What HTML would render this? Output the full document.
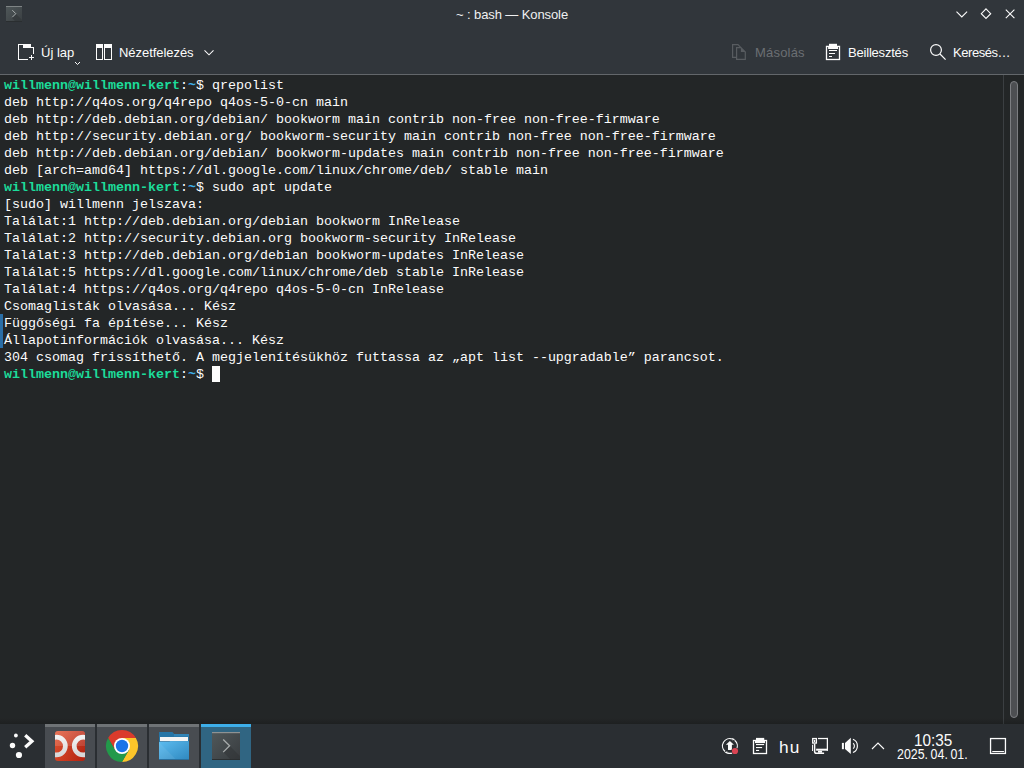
<!DOCTYPE html>
<html><head><meta charset="utf-8">
<style>
html,body{margin:0;padding:0;width:1024px;height:768px;overflow:hidden;background:#232627;}
*{box-sizing:border-box;}
.abs{position:absolute;}
svg{position:absolute;overflow:visible;}
#win{position:absolute;left:0;top:0;width:1024px;height:74px;background:#31363b;}
.ui{position:absolute;font-family:"Liberation Sans",sans-serif;font-size:12.5px;line-height:15px;color:#fcfcfc;white-space:nowrap;}
#sep{position:absolute;left:0;top:74px;width:1024px;height:1px;background:#63676b;}
#term{position:absolute;left:0;top:75px;width:1024px;height:649px;background:#232627;}
#vline{position:absolute;left:1003px;top:75px;width:1px;height:649px;background:#3b3f42;}
#handle{position:absolute;left:1010px;top:81px;width:8px;height:637px;border:1px solid #7c7e81;background:#4d4f52;border-radius:4px;}
pre{margin:0;position:absolute;left:4px;top:77px;font-family:"Liberation Mono",monospace;font-size:13.33px;line-height:17px;color:#fcfcfc;}
.g{color:#1cdc9a;font-weight:bold;}
.b{color:#3daee9;font-weight:bold;}
#cursor{position:absolute;left:212px;top:366px;width:8px;height:16px;background:#fcfcfc;}
#bluebar{position:absolute;left:0;top:314px;width:3px;height:34px;background:#2a6ea6;}
#panel{position:absolute;left:0;top:724px;width:1024px;height:44px;background:#2a2e32;}
.task{position:absolute;top:724px;width:50px;height:44px;background:#484c51;border-top:3px solid #6f7376;}
.task.act{background:#306582;border-top-color:#3daee9;}
</style></head><body>
<div id="win"></div>
<!-- titlebar icon -->
<svg style="left:0;top:0" width="28" height="28" viewBox="0 0 28 28">
  <defs><linearGradient id="kg1" x1="0" y1="0" x2="1" y2="1"><stop offset="0" stop-color="#4f5759"/><stop offset="1" stop-color="#3a3f42"/></linearGradient></defs>
  <rect x="6" y="6" width="16" height="16" fill="url(#kg1)"/>
  <rect x="6" y="6" width="16" height="1" fill="#7f8485"/>
  <rect x="6" y="21" width="16" height="1" fill="#2a2e30"/>
  <path d="M16 14 L22 20 V21 H15 L12 18 Z" fill="#33383b" opacity="0.8"/>
  <path d="M12.3 10.2 L15.8 13.7 L12.3 17.2" fill="none" stroke="#a9aeae" stroke-width="1"/>
</svg>
<div class="ui" style="left:456px;top:7px;font-size:13px;letter-spacing:-0.1px;color:#eff0f1;">~ : bash — Konsole</div>
<!-- titlebar buttons -->
<svg style="left:944px;top:0" width="80" height="30" viewBox="0 0 80 30">
  <path d="M12.5 11.7 L17.8 16.9 L23.1 11.7" fill="none" stroke="#fcfcfc" stroke-width="1.1"/>
  <path d="M42 8.9 L46.7 13.7 L42 18.5 L37.3 13.7 Z" fill="none" stroke="#fcfcfc" stroke-width="1.1"/>
  <path d="M61.8 9.6 L70.4 18.2 M70.4 9.6 L61.8 18.2" fill="none" stroke="#fcfcfc" stroke-width="1.1"/>
</svg>
<!-- toolbar -->
<svg style="left:18px;top:44px" width="16" height="16" viewBox="0 0 16 16">
  <rect x="0" y="0" width="1" height="16" fill="#fcfcfc"/>
  <rect x="0" y="0" width="13" height="1" fill="#fcfcfc"/>
  <rect x="5" y="0" width="8" height="4" fill="#fcfcfc"/>
  <rect x="13" y="3" width="3" height="1" fill="#fcfcfc"/>
  <rect x="15" y="3" width="1" height="7" fill="#fcfcfc"/>
  <rect x="0" y="15" width="10" height="1" fill="#fcfcfc"/>
  <rect x="13" y="11" width="1" height="5" fill="#fcfcfc"/>
  <rect x="11" y="13" width="5" height="1" fill="#fcfcfc"/>
</svg>
<div class="ui" style="left:41px;top:45px;font-size:13px;letter-spacing:0px;">Új lap</div>
<svg style="left:74px;top:60px" width="8" height="6" viewBox="0 0 8 6">
  <path d="M1 2 L3.5 4.5 L6 2" fill="none" stroke="#fcfcfc" stroke-width="1"/>
</svg>
<svg style="left:96px;top:44px" width="16" height="16" viewBox="0 0 16 16">
  <rect x="0.5" y="0.5" width="6" height="15" fill="none" stroke="#fcfcfc" stroke-width="1"/>
  <rect x="0" y="0" width="7" height="4" fill="#fcfcfc"/>
  <rect x="8.5" y="0.5" width="7" height="15" fill="none" stroke="#fcfcfc" stroke-width="1"/>
  <rect x="8" y="0" width="8" height="4" fill="#fcfcfc"/>
</svg>
<div class="ui" style="left:119px;top:45px;font-size:13px;letter-spacing:-0.05px;">Nézetfelezés</div>
<svg style="left:200px;top:44px" width="18" height="16" viewBox="0 0 18 16">
  <path d="M4.5 6.3 L9 10.8 L13.5 6.3" fill="none" stroke="#fcfcfc" stroke-width="1.05"/>
</svg>
<svg style="left:729px;top:42px" width="20" height="20" viewBox="0 0 20 20">
  <path d="M7.6 15.3 H3.6 V2.7 H9 L11.9 5.6" fill="none" stroke="#585c60" stroke-width="1.2"/>
  <path d="M7.6 17.4 V5.6 H11.9 L16.3 10 V17.4 Z" fill="none" stroke="#585c60" stroke-width="1.2"/>
  <path d="M11.9 5.6 L16.3 10 H11.9 Z" fill="#585c60"/>
</svg>
<div class="ui" style="left:755px;top:45px;font-size:13px;letter-spacing:0.2px;color:#6b6f73;">Másolás</div>
<svg style="left:823px;top:42px" width="20" height="20" viewBox="0 0 20 20">
  <rect x="3.5" y="4.4" width="13" height="13.1" fill="none" stroke="#fcfcfc" stroke-width="1.3"/>
  <rect x="6" y="1.8" width="8" height="3.2" fill="#fcfcfc"/>
  <rect x="5.1" y="4.5" width="9.9" height="2.5" fill="#fcfcfc"/>
  <rect x="6" y="8" width="8" height="1" fill="#fcfcfc"/>
  <rect x="6" y="11" width="6" height="1" fill="#fcfcfc"/>
  <rect x="6" y="14" width="3" height="1" fill="#fcfcfc"/>
</svg>
<div class="ui" style="left:848px;top:45px;font-size:13px;letter-spacing:-0.2px;">Beillesztés</div>
<svg style="left:928px;top:42px" width="20" height="20" viewBox="0 0 20 20">
  <circle cx="8" cy="8" r="5.4" fill="none" stroke="#fcfcfc" stroke-width="1.2"/>
  <path d="M12 12 L17.6 17.6" stroke="#fcfcfc" stroke-width="1.2"/>
</svg>
<div class="ui" style="left:953px;top:45px;font-size:13px;letter-spacing:-0.45px;">Keresés…</div>
<div id="sep"></div>
<div id="term"></div>
<div id="vline"></div>
<div id="handle"></div>
<pre><span class="g">willmenn@willmenn-kert</span>:<span class="b">~</span>$ qrepolist
deb http://q4os.org/q4repo q4os-5-0-cn main
deb http://deb.debian.org/debian/ bookworm main contrib non-free non-free-firmware
deb http://security.debian.org/ bookworm-security main contrib non-free non-free-firmware
deb http://deb.debian.org/debian/ bookworm-updates main contrib non-free non-free-firmware
deb [arch=amd64] https://dl.google.com/linux/chrome/deb/ stable main
<span class="g">willmenn@willmenn-kert</span>:<span class="b">~</span>$ sudo apt update
[sudo] willmenn jelszava:
Találat:1 http://deb.debian.org/debian bookworm InRelease
Találat:2 http://security.debian.org bookworm-security InRelease
Találat:3 http://deb.debian.org/debian bookworm-updates InRelease
Találat:5 https://dl.google.com/linux/chrome/deb stable InRelease
Találat:4 https://q4os.org/q4repo q4os-5-0-cn InRelease
Csomaglisták olvasása... Kész
Függőségi fa építése... Kész
Állapotinformációk olvasása... Kész
304 csomag frissíthető. A megjelenítésükhöz futtassa az „apt list --upgradable” parancsot.
<span class="g">willmenn@willmenn-kert</span>:<span class="b">~</span>$ </pre>
<div id="cursor"></div>
<div id="bluebar"></div>
<!-- PANEL -->
<div class="abs" style="left:0;top:718px;width:1024px;height:6px;background:linear-gradient(to bottom,rgba(0,0,0,0),rgba(0,0,0,0.16));"></div>
<div id="panel"></div>
<!-- launcher -->
<svg style="left:0;top:724px" width="45" height="44" viewBox="0 0 45 44">
  <circle cx="15.9" cy="11.5" r="1.9" fill="#fcfcfc"/>
  <circle cx="12.5" cy="21.5" r="2.7" fill="#fcfcfc"/>
  <circle cx="18.95" cy="31" r="3.1" fill="#fcfcfc"/>
  <path d="M25.2 11.3 L31.9 17.3 L25.2 23.3" fill="none" stroke="#fcfcfc" stroke-width="3.3"/>
</svg>
<div class="task" style="left:45px"></div>
<div class="task" style="left:97px"></div>
<div class="task" style="left:149px"></div>
<div class="task act" style="left:201px"></div>
<!-- dc icon -->
<svg style="left:55px;top:731px" width="30" height="30" viewBox="0 0 30 30">
  <defs>
    <linearGradient id="dcg" x1="0" y1="0" x2="0" y2="1"><stop offset="0" stop-color="#e2705a"/><stop offset="0.5" stop-color="#d25a45"/><stop offset="0.5" stop-color="#c8381e"/><stop offset="1" stop-color="#c42d14"/></linearGradient>
    <linearGradient id="dch" x1="0" y1="0" x2="1" y2="0"><stop offset="0" stop-color="#ff8050" stop-opacity="0.25"/><stop offset="1" stop-color="#800000" stop-opacity="0.25"/></linearGradient>
    <linearGradient id="dcr" x1="0" y1="0" x2="0" y2="1"><stop offset="0" stop-color="#f2f2f2"/><stop offset="1" stop-color="#d8d8d8"/></linearGradient>
    <clipPath id="dcc"><rect x="0" y="0" width="30" height="30" rx="3"/></clipPath>
  </defs>
  <g clip-path="url(#dcc)">
    <rect x="0" y="0" width="30" height="30" fill="url(#dcg)"/>
    <rect x="0" y="0" width="30" height="30" fill="url(#dch)"/>
    <circle cx="1.45" cy="15.05" r="8.9" fill="none" stroke="url(#dcr)" stroke-width="4.7"/>
    <circle cx="28.15" cy="15.05" r="8.9" fill="none" stroke="url(#dcr)" stroke-width="4.7"/>
  </g>
</svg>
<!-- chrome -->
<svg style="left:106px;top:730px" width="32" height="32" viewBox="0 0 32 32">
  <path d="M16 8 L29.86 8 A16 16 0 0 0 2.14 8 L9.07 20 L16 16 Z" fill="#db3b2c"/>
  <path d="M16 8 L29.86 8 A16 16 0 0 1 16 32 L22.93 20 L16 16 Z" fill="#fcc52a"/>
  <path d="M22.93 20 L16 32 A16 16 0 0 1 2.14 8 L9.07 20 L16 16 Z" fill="#22994a"/>
  <circle cx="16" cy="16" r="8" fill="#ffffff"/>
  <circle cx="16" cy="16" r="6.2" fill="#1b73e8"/>
</svg>
<!-- folder -->
<svg style="left:159px;top:732px" width="30" height="28" viewBox="0 0 30 28">
  <defs><linearGradient id="fg" x1="0" y1="0" x2="1" y2="1"><stop offset="0" stop-color="#5cbcf0"/><stop offset="1" stop-color="#2f88bf"/></linearGradient></defs>
  <path d="M0 0 H13.4 L15.2 2 H30 V27 H0 Z" fill="#2675a6"/>
  <rect x="15" y="2" width="15" height="2.5" fill="#3a8ec2" opacity="0.6"/>
  <rect x="1" y="5" width="28" height="4.2" fill="#f5f5f5"/>
  <path d="M0 10.06 H10.5 L11.2 9.36 H30 V28 H0 Z" fill="url(#fg)"/>
  <path d="M0 10.06 L17.5 28 H0 Z" fill="#ffffff" opacity="0.07"/>
  <rect x="0" y="27" width="30" height="1" fill="#2a6f9c"/>
</svg>
<!-- konsole task icon -->
<svg style="left:212px;top:732px" width="28" height="28" viewBox="0 0 28 28">
  <defs><linearGradient id="kg2" x1="0" y1="0" x2="1" y2="1"><stop offset="0" stop-color="#50585a"/><stop offset="1" stop-color="#383c3f"/></linearGradient></defs>
  <rect x="0" y="0" width="28" height="28" fill="url(#kg2)"/>
  <rect x="0" y="0" width="28" height="1.2" fill="#8e9293"/>
  <rect x="0" y="27" width="28" height="1" fill="#2b2f31"/>
  <path d="M17.6 13.8 L28 24.2 V28 H19.1 L11.2 20.1 Z" fill="#2c3033" opacity="0.4"/>
  <path d="M11.2 7.5 L17.6 13.8 L11.2 20.1" fill="none" stroke="#a7acac" stroke-width="1.3"/>
</svg>
<!-- tray: updates -->
<svg style="left:718px;top:734px" width="24" height="24" viewBox="0 0 24 24">
  <path d="M14.43 4.95 A7.4 7.4 0 0 0 7.14 17.57" fill="none" stroke="#fcfcfc" stroke-width="1.2"/>
  <path d="M9.37 18.85 A7.4 7.4 0 0 0 16.66 6.23" fill="none" stroke="#fcfcfc" stroke-width="1.2"/>
  <path d="M14 3.9 L17.2 5.2 L14.6 6.6 Z" fill="#fcfcfc"/>
  <path d="M9.8 20 L6.6 18.6 L9.2 17.2 Z" fill="#fcfcfc"/>
  <path d="M7.9 10.7 L11.9 7 L15.9 10.7 H13.9 V15.9 H10 V10.7 Z" fill="#fcfcfc"/>
  <circle cx="17" cy="17" r="3.6" fill="#2a2e32"/>
  <circle cx="17" cy="17" r="3.1" fill="#da4453"/>
</svg>
<!-- tray: clipboard -->
<svg style="left:748px;top:734px" width="24" height="24" viewBox="0 0 24 24">
  <rect x="5.5" y="6.5" width="13" height="13" fill="none" stroke="#fcfcfc" stroke-width="1.3"/>
  <rect x="8" y="3.9" width="8.2" height="3" fill="#fcfcfc"/>
  <rect x="7" y="5.9" width="10" height="3.2" fill="#fcfcfc"/>
  <rect x="8" y="10" width="8.1" height="1.1" fill="#fcfcfc"/>
  <rect x="8" y="13" width="6.1" height="1.1" fill="#fcfcfc"/>
  <rect x="8" y="15.9" width="3.1" height="1.1" fill="#fcfcfc"/>
</svg>
<div class="ui" style="left:779px;top:737px;font-size:17.3px;line-height:20px;letter-spacing:1.1px;">hu</div>
<!-- tray: network -->
<svg style="left:808px;top:734px" width="24" height="24" viewBox="0 0 24 24">
  <rect x="4.7" y="4.55" width="3.7" height="4.5" fill="none" stroke="#fcfcfc" stroke-width="1.3"/>
  <rect x="5.9" y="5.8" width="1.3" height="2.3" rx="0.65" fill="#fcfcfc"/>
  <rect x="4.06" y="10.8" width="0.95" height="6.2" fill="#fcfcfc"/>
  <path d="M6.6 9.7 V17.4 Q6.6 19.2 8.4 19.2 H16.1" fill="none" stroke="#fcfcfc" stroke-width="1.5"/>
  <rect x="10" y="3.9" width="10" height="1.25" fill="#fcfcfc"/>
  <rect x="18.75" y="3.9" width="1.25" height="12.8" fill="#fcfcfc"/>
  <rect x="8.1" y="14.7" width="11.9" height="2" fill="#fcfcfc"/>
  <rect x="10" y="16.7" width="4.06" height="2" fill="#fcfcfc"/>
</svg>
<!-- tray: volume -->
<svg style="left:838px;top:734px" width="24" height="24" viewBox="0 0 24 24">
  <rect x="3.9" y="8.9" width="2" height="6.3" fill="#fcfcfc"/>
  <path d="M7 8.9 L12.8 3.8 V20 L7 15 Z" fill="#fcfcfc"/>
  <path d="M15.15 9.22 A3.5 3.5 0 0 1 15.15 14.58" fill="none" stroke="#fcfcfc" stroke-width="1.15"/>
  <path d="M14.96 5.32 A7.1 7.1 0 0 1 14.96 18.48" fill="none" stroke="#fcfcfc" stroke-width="1.15"/>
</svg>
<!-- tray: chevron up -->
<svg style="left:868px;top:738px" width="20" height="16" viewBox="0 0 20 16">
  <path d="M4 11 L10 5 L16 11" fill="none" stroke="#fcfcfc" stroke-width="1.1"/>
</svg>
<div class="ui" style="left:914px;top:732px;font-size:16.1px;line-height:17px;transform:scaleX(0.95);transform-origin:0 0;">10:35</div>
<div class="ui" style="left:897px;top:746px;font-size:14.75px;line-height:16px;word-spacing:-1px;transform:scaleX(0.84);transform-origin:0 0;">2025. 04. 01.</div>
<!-- show desktop -->
<svg style="left:986px;top:734px" width="24" height="24" viewBox="0 0 24 24">
  <rect x="4.55" y="4.55" width="14.9" height="14.9" fill="none" stroke="#fcfcfc" stroke-width="1.3"/>
  <rect x="6.1" y="16.9" width="12" height="1.1" rx="0.5" fill="#fcfcfc"/>
</svg>
</body></html>
